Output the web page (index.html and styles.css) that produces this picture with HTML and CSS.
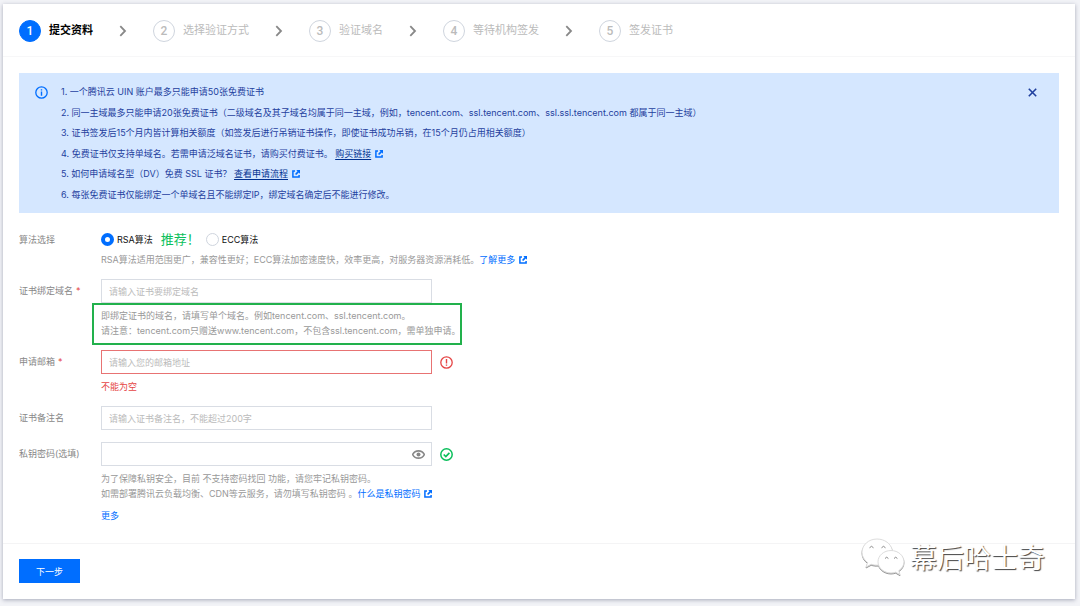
FILE: index.html
```html
<!DOCTYPE html>
<html lang="zh-CN">
<head>
<meta charset="utf-8">
<meta name="viewport" content="width=device-width, initial-scale=1">
<title>提交资料</title>
<link rel="stylesheet" href="styles.css">
</head>
<body>
<svg class="sprite" aria-hidden="true">
  <symbol id="external" viewBox="0 0 8 8"><path d="M3 .9H.9V7.1H7.1V5" fill="none" stroke="currentColor" stroke-width="1.5"/><path d="M4.3 0H8V3.7L6.8 2.5 4.2 5.1 3 3.9 5.5 1.3z" fill="currentColor"/></symbol>
  <symbol id="chevron" viewBox="0 0 8 12"><path d="M1.3 1.2 6 6 1.3 10.8" fill="none" stroke="currentColor" stroke-width="1.8"/></symbol>
</svg>
<main class="card">
  <header class="header">
    <ol class="steps">
      <li class="step step-active"><span class="step-number">1</span><span>提交资料</span></li>
      <li class="step"><svg class="chevron"><use href="#chevron"/></svg><span class="step-number">2</span><span>选择验证方式</span></li>
      <li class="step"><svg class="chevron"><use href="#chevron"/></svg><span class="step-number">3</span><span>验证域名</span></li>
      <li class="step"><svg class="chevron"><use href="#chevron"/></svg><span class="step-number">4</span><span>等待机构签发</span></li>
      <li class="step"><svg class="chevron"><use href="#chevron"/></svg><span class="step-number">5</span><span>签发证书</span></li>
    </ol>
  </header>

  <div class="content">
    <section class="notice">
      <svg class="notice-icon" viewBox="0 0 13 13" aria-hidden="true"><circle cx="6.5" cy="6.5" r="5.7" fill="none" stroke="currentColor" stroke-width="1.3"/><path d="M5.8 3.2h1.4v1.4H5.8zM5.8 5.5h1.4v4.3H5.8z" fill="currentColor"/></svg>
      <div class="notice-list">
        <p>1. 一个腾讯云 UIN 账户最多只能申请50张免费证书</p>
        <p>2. 同一主域最多只能申请20张免费证书（二级域名及其子域名均属于同一主域，例如，tencent.com、ssl.tencent.com、ssl.ssl.tencent.com 都属于同一主域）</p>
        <p>3. 证书签发后15个月内皆计算相关额度（如签发后进行吊销证书操作，即使证书成功吊销，在15个月仍占用相关额度）</p>
        <p>4. 免费证书仅支持单域名。若需申请泛域名证书，请购买付费证书。 <a class="notice-link" href="#buy">购买链接</a><svg class="external"><use href="#external"/></svg></p>
        <p>5. 如何申请域名型（DV）免费 SSL 证书？ <a class="notice-link" href="#flow">查看申请流程</a><svg class="external"><use href="#external"/></svg></p>
        <p>6. 每张免费证书仅能绑定一个单域名且不能绑定IP，绑定域名确定后不能进行修改。</p>
      </div>
      <button class="close" type="button" aria-label="关闭"><svg viewBox="0 0 8 8"><path d="M.7.7 7.3 7.3M7.3.7.7 7.3" stroke="currentColor" stroke-width="1.4"/></svg></button>
    </section>

    <form class="form" id="apply">
      <div class="row">
        <span class="label label-radio" id="algorithm">算法选择</span>
        <div>
          <div class="radios" role="radiogroup" aria-labelledby="algorithm">
            <label class="radio"><input type="radio" name="algorithm" checked>RSA算法</label>
            <span class="recommend">推荐！</span>
            <label class="radio"><input type="radio" name="algorithm">ECC算法</label>
          </div>
          <p class="help help-radio">RSA算法适用范围更广，兼容性更好；ECC算法加密速度快，效率更高，对服务器资源消耗低。<a class="link" href="#more-info">了解更多</a><svg class="external"><use href="#external"/></svg></p>
        </div>
      </div>

      <div class="row">
        <label class="label" for="domain">证书绑定域名<span class="required">*</span></label>
        <div>
          <div class="control"><input class="input" id="domain" type="text" placeholder="请输入证书要绑定域名"></div>
          <div class="help marked">
            <p>即绑定证书的域名，请填写单个域名。例如tencent.com、ssl.tencent.com。</p>
            <p>请注意：tencent.com只赠送www.tencent.com，不包含ssl.tencent.com，需单独申请。</p>
          </div>
        </div>
      </div>

      <div class="row">
        <label class="label" for="email">申请邮箱<span class="required">*</span></label>
        <div>
          <div class="control"><input class="input input-error" id="email" type="email" placeholder="请输入您的邮箱地址"><svg class="status status-error" viewBox="0 0 13 13" aria-hidden="true"><circle cx="6.5" cy="6.5" r="5.7" fill="none" stroke="currentColor" stroke-width="1.3"/><path d="M5.8 3h1.4v4.4H5.8zM5.8 8.4h1.4v1.4H5.8z" fill="currentColor"/></svg></div>
          <p class="help error">不能为空</p>
        </div>
      </div>

      <div class="row">
        <label class="label" for="remark">证书备注名</label>
        <div class="control"><input class="input" id="remark" type="text" placeholder="请输入证书备注名，不能超过200字"></div>
      </div>

      <div class="row">
        <label class="label" for="password">私钥密码(选填)</label>
        <div>
          <div class="control">
            <div class="password">
              <input class="input" id="password" type="password">
              <button class="reveal" type="button" aria-label="显示密码"><svg viewBox="0 0 13 9"><path d="M.7 4.5C2 2 4 .9 6.5.9S11 2 12.3 4.5C11 7 9 8.1 6.5 8.1S2 7 .7 4.5z" fill="none" stroke="currentColor" stroke-width="1.6"/><circle cx="6.5" cy="4.5" r="2" fill="currentColor"/></svg></button>
            </div>
            <svg class="status status-ok" viewBox="0 0 13 13" aria-hidden="true"><circle cx="6.5" cy="6.5" r="5.7" fill="none" stroke="currentColor" stroke-width="1.5"/><path d="M3.7 6.500 5.8 8.5 9.4 4.9" fill="none" stroke="currentColor" stroke-width="1.700"/></svg>
          </div>
          <div class="help">
            <p>为了保障私钥安全，目前 不支持密码找回 功能，请您牢记私钥密码。</p>
            <p>如需部署腾讯云负载均衡、CDN等云服务，请勿填写私钥密码 。<a class="link" href="#key">什么是私钥密码</a><svg class="external"><use href="#external"/></svg></p>
          </div>
          <a class="link more" href="#more">更多</a>
        </div>
      </div>
    </form>
  </div>

  <footer class="footer"><button class="next" type="submit" form="apply">下一步</button></footer>
</main>

<div class="watermark">
  <svg viewBox="0 0 44 38" aria-hidden="true"><path d="M31.500 12.500C30 5.500 23.500 1 16 1 7.500 1 1 7 1 14.300c0 4.200 2.200 7.700 5.600 10.200L5 29l5.200-2.700c2.500.8 4.700 1 7.200.8"/><path d="M43 23.800C43 17.500 37 12.500 30 12.500S17 17.500 17 23.800s6 11.200 13 11.200c1.600 0 3.200-.3 4.700-.8L39 36.700l-1.200-4C41 30.500 43 27.400 43 23.800z"/><path class="eyes" d="M8.500 9.800q2-3 4 0M20.500 9.800q2-3 4 0M24 20.500q1.700-2.600 3.400 0M33 20.500q1.700-2.600 3.400 0"/></svg>
  <span>幕后哈士奇</span>
</div>
</body>
</html>
```

FILE: styles.css
```css
* { box-sizing: border-box; }

body {
  margin: 0;
  padding: 4px 5px 7px 3px;
  background: #f2f3f7;
  color: #222;
  font-family: Inter, "Noto Sans CJK SC", sans-serif;
  font-size: 9px;
  line-height: 15px;
}

p, ol { margin: 0; padding: 0; }
button, input { font: inherit; }
button { padding: 0; border: 0; background: none; cursor: pointer; }
.sprite { position: absolute; width: 0; height: 0; }

.card { background: #fff; box-shadow: 0 1px 4px rgba(50, 55, 90, .4); }

.header { padding: 16px 16px 14px; border-bottom: 1px solid #f7f7f8; }
.steps { display: flex; flex-wrap: wrap; list-style: none; font-family: Roboto, "Noto Sans CJK SC", sans-serif; }
.step { display: flex; align-items: center; gap: 8px; color: #bbb; font-size: 11px; line-height: 22px; }
.step-active { color: #000; font-weight: 700; }
.step-number {
  width: 22px;
  height: 22px;
  border: 1px solid #cfd5de;
  border-radius: 50%;
  font-size: 12px;
  font-weight: 500;
  line-height: 20px;
  text-align: center;
}
.step-active .step-number { border-color: #006eff; background: #006eff; color: #fff; }
.chevron { width: 8px; height: 12px; margin: 0 18px 0 26px; color: #888; }

.content { padding: 16px 16px 20px; }

.notice { display: flex; padding: 9px 22px 8px 16px; background: #d5e7ff; color: #1f3f9e; }
.notice-icon { width: 13px; height: 13px; margin: 4px 13px 0 0; color: #006eff; flex: none; }
.notice-list { display: flex; flex: 1; flex-direction: column; justify-content: space-between; min-height: 123px; line-height: 20px; }
.notice-link { color: #00308f; text-decoration: underline; text-underline-offset: 2px; }
.close { width: 9px; height: 9px; margin-top: 6px; color: #1f3f9e; }
.close svg, .reveal svg { display: block; width: 100%; height: 100%; }

.external { width: 8px; height: 8px; margin-left: 4px; color: #006eff; vertical-align: -1px; }
.link { color: #006eff; text-decoration: none; }

.form { display: grid; gap: 12px; padding-top: 16px; }
.row { display: grid; grid-template-columns: 82px 1fr; }
.label { color: #888; line-height: 24px; }
.label-radio { line-height: 22px; }
.required { margin-left: 3px; color: #e54545; }

.radios { display: flex; align-items: center; height: 20px; color: #111; }
.radio { display: flex; align-items: center; gap: 3px; }
.radio input { width: 13px; height: 13px; margin: 0; border: 1px solid #cfd5de; border-radius: 50%; background: #fff; appearance: none; }
.radio input:checked { border: 4px solid #006eff; }
.recommend { width: 39px; margin: 0 6px 0 8px; color: #0abf5b; font-size: 13px; white-space: nowrap; }

.control { display: flex; align-items: center; gap: 8px; }
.input { width: 331px; max-width: 100%; height: 24px; padding: 0 7px; border: 1px solid #d9dde4; border-radius: 0; background: #fff; color: #222; outline: 0; }
.input::placeholder { color: #bbb; opacity: 1; }
.input-error { border-color: #e87373; }
.status { width: 13px; height: 13px; flex: none; }
.status-error { color: #e54545; }
.status-ok { color: #0abf5b; }
.password { position: relative; display: flex; }
.reveal { position: absolute; top: 8px; right: 7px; width: 13px; height: 9px; color: #888; }

.help { margin-top: 5px; color: #999; }
.help-radio { margin-top: 3px; }
.error { color: #e54545; }
.more { display: block; margin-top: 7px; }

.marked { position: relative; width: 360px; max-width: 100%; white-space: nowrap; }
.marked::after { content: ""; position: absolute; inset: -5px -1px -7px -9px; border: 2px solid #22b14c; }

.footer { padding: 15px 16px 16px; border-top: 1px solid #f4f4f5; }
.next { display: block; padding: 0 16px; min-width: 61px; height: 24px; background: #006eff; color: #fff; }

.watermark { position: absolute; right: 35px; bottom: 30px; display: flex; align-items: center; gap: 5px; color: #fff; font-family: "Noto Sans CJK SC", sans-serif; font-size: 27px; line-height: 38px; text-shadow: 1px 1px 1px #444; }
.watermark svg { width: 44px; height: 38px; fill: #fff; stroke: #ddd; stroke-width: 1; filter: drop-shadow(0 1px 0 #999); }
.watermark .eyes { fill: none; stroke: #888; }
```
